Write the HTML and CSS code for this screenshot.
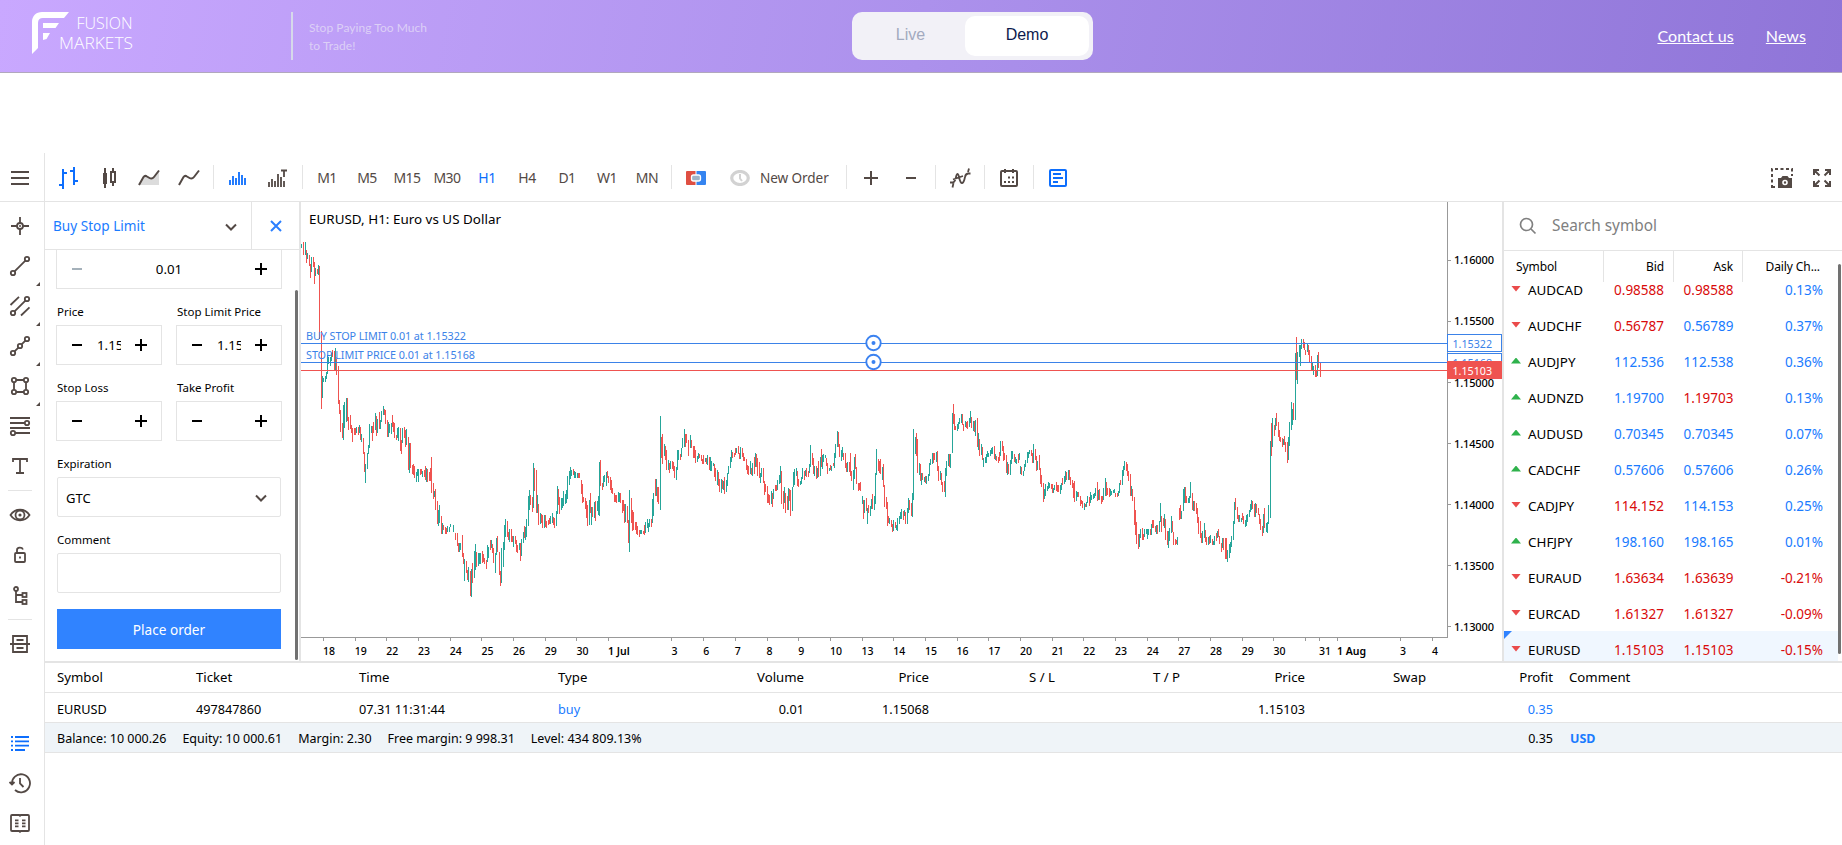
FILE: index.html
```html
<!DOCTYPE html>
<html lang="en">
<head>
    <meta charset="UTF-8">
    <meta name="viewport" content="width=device-width, initial-scale=1.0">
    <title>Fusion Markets - Web Terminal</title>
    <link rel="stylesheet" href="styles.css">
</head>
<body>
    <header class="site-header">
        <svg class="logo" width="102" height="44" viewBox="0 0 102 44">
            <path fill="#fff" d="M0 42V10C0 4 4 0 10 0H37L32 6H11Q6 6 6 11V36Z"/>
            <path fill="#fff" d="M11 11H27L23.500 16H11ZM11 21H18L14.500 27L11 28Z"/>
            <text x="44.500" y="17" textLength="56" lengthAdjust="spacingAndGlyphs">FUSION</text>
            <text x="27" y="37" textLength="74" lengthAdjust="spacingAndGlyphs">MARKETS</text>
        </svg>
        <div class="tagline">Stop Paying Too Much<br>to Trade!</div>
        <div class="account-switch">
            <a class="switch-item">Live</a>
            <a class="switch-item active">Demo</a>
        </div>
        <nav class="header-links">
            <a>Contact us</a>
            <a>News</a>
        </nav>
    </header>

    <div class="terminal">
        <aside class="sidebar">
            <div class="menu-button">
                <svg class="icon" viewBox="0 0 24 24"><path d="M3 6H21M3 12H21M3 18H21"/></svg>
            </div>
            <div class="tools">
                <div class="tool"><svg class="icon" viewBox="0 0 24 24"><circle cx="12" cy="12" r="3"/><circle class="solid" cx="12" cy="12" r="1"/><path d="M12 3V9M12 15V21M3 12H9M15 12H21"/></svg></div>
                <div class="tool more"><svg class="icon" viewBox="0 0 24 24"><circle cx="19" cy="5" r="2.200"/><circle cx="5" cy="19" r="2.200"/><path d="M6.600 17.400L17.400 6.600"/></svg></div>
                <div class="tool more"><svg class="icon" viewBox="0 0 24 24"><circle cx="19" cy="5" r="2.200"/><circle cx="5" cy="19" r="2.200"/><path d="M6.600 17.400L17.400 6.600M2.500 11L11 2.800M13 21.500L21.500 13.300"/></svg></div>
                <div class="tool more"><svg class="icon" viewBox="0 0 24 24"><circle cx="19" cy="5" r="2.200"/><circle cx="12" cy="12" r="2.200"/><circle cx="5" cy="19" r="2.200"/><path d="M6.600 17.400L10.400 13.600M13.600 10.400L17.400 6.600"/></svg></div>
                <div class="tool more"><svg class="icon" viewBox="0 0 24 24"><circle cx="6" cy="6" r="2.200"/><circle cx="18" cy="6" r="2.200"/><circle cx="6" cy="18" r="2.200"/><circle cx="18" cy="18" r="2.200"/><path d="M8.200 6H15.800M8.200 18H15.800M6 8.200V15.800M18 8.200V15.800"/></svg></div>
                <div class="tool"><svg class="icon" viewBox="0 0 24 24"><path d="M2 4H22M2 9H16.800M2 14H22M7.200 19H22"/><circle cx="19" cy="9" r="2.200"/><circle cx="5" cy="19" r="2.200"/></svg></div>
                <div class="tool"><svg class="icon" viewBox="0 0 24 24"><path d="M5 8V5H19V8M12 5V19M8 19H16"/></svg></div>
                <div class="tool-line"></div>
                <div class="tool"><svg class="icon" viewBox="0 0 24 24"><path d="M2.500 12C7 5 17 5 21.500 12C17 19 7 19 2.500 12Z"/><circle cx="12" cy="12" r="4.500"/><circle class="solid" cx="12" cy="12" r="1.600"/></svg></div>
                <div class="tool"><svg class="icon" viewBox="0 0 24 24"><rect x="7" y="10" width="10" height="9" rx="1"/><path d="M9 10V7C9 4 14 4 15 6.500M12 13.500V15.500"/></svg></div>
                <div class="tool"><svg class="icon" viewBox="0 0 24 24"><circle cx="8" cy="6" r="2"/><path d="M8 8V19H14M8 12H14"/><rect x="14.500" y="10" width="4" height="4"/><rect x="14.500" y="17" width="4" height="4"/></svg></div>
                <div class="tool-line"></div>
                <div class="tool"><svg class="icon" viewBox="0 0 24 24"><path d="M5 11V4H19V11M5 13V20H19V13M2 12H22M8.500 8H15.500M8.500 16H15.500"/></svg></div>
            </div>
            <div class="tools tools-bottom">
                <div class="tool"><svg class="icon blue" viewBox="0 0 24 24"><path d="M7 6H21M7 10.300H21M7 14.600H21M7 19H17M3 6H5M3 10.300H5M3 14.600H5M3 19H5"/></svg></div>
                <div class="tool"><svg class="icon" viewBox="0 0 24 24"><path d="M4 13A9 9 0 1 1 7 19M1.500 11L4 13.500L6.500 11M12 7V12.500L15.500 16"/></svg></div>
                <div class="tool"><svg class="icon" viewBox="0 0 24 24"><path d="M11 4H4Q3 4 3 5V19Q3 20 4 20H11L12 20.800L13 20H20Q21 20 21 19V5Q21 4 20 4H13L12 4.800ZM7 9.300H10.500M7 12.300H10.500M7 15.300H10.500M14 9.300H17.500M14 12.300H17.500M14 15.300H17.500" stroke-width="1.800"/></svg></div>
            </div>
        </aside>

        <main class="main">
            <div class="toolbar">
                <div class="tb-item"><svg class="icon blue" viewBox="0 0 24 24"><path d="M6 3V23M2 19H6M6 7H10M17 1V19M13 5H17M17 15H21"/></svg></div>
                <div class="tb-item"><svg class="icon" viewBox="0 0 24 24"><path d="M8 2V22M16 2V6M16 16V20"/><rect class="solid" x="6" y="7" width="4" height="11"/><rect x="14" y="6" width="4" height="10"/></svg></div>
                <div class="tb-item"><svg class="icon" viewBox="0 0 24 24"><path class="shade" d="M2 19L8 10L15 13L22 4V19Z"/><path d="M2 19L6.500 11Q8 9 10 10.500L12.500 12Q15 13.500 17 11L22 4.500"/></svg></div>
                <div class="tb-item"><svg class="icon" viewBox="0 0 24 24"><path d="M2 19L6.500 11Q8 9 10 10.500L12.500 12Q15 13.500 17 11L22 4.500"/></svg></div>
                <div class="tb-sep"></div>
                <div class="tb-item"><svg class="icon blue" viewBox="0 0 24 24"><path d="M4 19V14M7 19V10M10 19V12M13 19V6M16 19V9M19 19V12" stroke-width="1.800"/></svg></div>
                <div class="tb-item"><svg class="icon" viewBox="0 0 24 24"><path d="M3 21V16M6 21V13M9 21V15M12 21V8M15 21V11M18 21V15M15 4.500H21M18 4.500V11" stroke-width="1.800"/></svg></div>
                <div class="tb-sep"></div>
                <div class="tb-item">M1</div>
                <div class="tb-item">M5</div>
                <div class="tb-item">M15</div>
                <div class="tb-item">M30</div>
                <div class="tb-item selected">H1</div>
                <div class="tb-item">H4</div>
                <div class="tb-item">D1</div>
                <div class="tb-item">W1</div>
                <div class="tb-item">MN</div>
                <div class="tb-sep"></div>
                <div class="tb-item"><svg width="20" height="14" viewBox="0 0 20 14"><path fill="#df4f42" d="M1 0H9.500V14H1Q0 14 0 13V1Q0 0 1 0Z"/><path fill="#3584f0" d="M10.500 0H19Q20 0 20 1V13Q20 14 19 14H10.500Z"/><rect x="5.500" y="4" width="9" height="6" rx="2" fill="#9fb4c8" stroke="#fff" stroke-width="1.300"/></svg></div>
                <div class="tb-item new-order">
                    <svg width="20" height="16" viewBox="0 0 20 16"><ellipse cx="10" cy="8" rx="8.300" ry="6.500" fill="none" stroke="#d2d2d2" stroke-width="3.200"/><path d="M10 4V8.500L12 11" fill="none" stroke="#d2d2d2" stroke-width="2"/></svg>
                    New Order
                </div>
                <div class="tb-sep"></div>
                <div class="tb-item"><svg class="icon" viewBox="0 0 24 24"><path d="M12 5V19M5 12H19"/></svg></div>
                <div class="tb-item"><svg class="icon" viewBox="0 0 24 24"><path d="M7 12H17"/></svg></div>
                <div class="tb-sep"></div>
                <div class="tb-item"><svg class="icon" viewBox="0 0 24 24"><path d="M2 16.500H5Q7 16 8 11Q9.500 5 11 11Q12.500 18 14.500 17Q16 16 17 11Q17.500 8 20 7.500H22.500M4.500 21.500L5.500 17M5 13.500L15 10M20 6L21 2.500" stroke-width="1.800"/></svg></div>
                <div class="tb-sep"></div>
                <div class="tb-item"><svg class="icon" viewBox="0 0 24 24"><rect x="4" y="5" width="16" height="15" rx="1"/><path d="M8 3V7M16 3V7"/><path stroke-dasharray="2 2" d="M11 11.500H17M7 16H17"/></svg></div>
                <div class="tb-sep"></div>
                <div class="tb-item"><svg class="icon blue" viewBox="0 0 24 24"><rect x="4" y="4" width="16" height="16" rx="1"/><path d="M7 8H15M7 12H17M7 16H12"/></svg></div>
                <div class="tb-right">
                    <div class="tb-item"><svg class="icon" viewBox="0 0 24 24"><path stroke-dasharray="3 2.500" d="M2 22V3H22V10M2 21H7"/><path class="solid" d="M8 12H11L12.500 10H17.500L19 12H22V22H8Z"/><circle cx="15" cy="16.500" r="2" fill="#534945" stroke="#fff" stroke-width="1.600"/></svg></div>
                    <div class="tb-item"><svg class="icon" viewBox="0 0 24 24"><path d="M4 9V4H9M4 4L9.500 9.500M15 4H20V9M20 4L14.500 9.500M4 15V20H9M4 20L9.500 14.500M20 15V20H15M20 20L14.500 14.500"/></svg></div>
                </div>
            </div>

            <div class="workspace">
                <section class="order-panel">
                    <div class="order-head">
                        <div class="order-type">Buy Stop Limit
                            <svg width="12" height="8" viewBox="0 0 12 8"><path d="M1 1.500L6 6.500L11 1.500"/></svg>
                        </div>
                        <div class="order-close">
                            <svg width="12" height="12" viewBox="0 0 12 12"><path d="M1 1L11 11M11 1L1 11"/></svg>
                        </div>
                    </div>
                    <div class="order-body">
                        <div class="stepper volume"><i class="minus off"></i><span>0.01</span><i class="plus"></i></div>
                        <div class="pair">
                            <div class="field">
                                <label>Price</label>
                                <div class="stepper"><i class="minus"></i><span>1.15322</span><i class="plus"></i></div>
                            </div>
                            <div class="field">
                                <label>Stop Limit Price</label>
                                <div class="stepper"><i class="minus"></i><span>1.15168</span><i class="plus"></i></div>
                            </div>
                        </div>
                        <div class="pair">
                            <div class="field">
                                <label>Stop Loss</label>
                                <div class="stepper"><i class="minus"></i><span></span><i class="plus"></i></div>
                            </div>
                            <div class="field">
                                <label>Take Profit</label>
                                <div class="stepper"><i class="minus"></i><span></span><i class="plus"></i></div>
                            </div>
                        </div>
                        <div class="field single">
                            <label>Expiration</label>
                            <div class="select">GTC
                                <svg width="12" height="8" viewBox="0 0 12 8"><path d="M1 1.500L6 6.500L11 1.500"/></svg>
                            </div>
                        </div>
                        <div class="field single">
                            <label>Comment</label>
                            <div class="select"></div>
                        </div>
                        <button class="place-order">Place order</button>
                        <div class="scrollbar"></div>
                    </div>
                </section>

                <section class="chart">
                    <svg id="chart" width="1201" height="459" viewBox="301 202 1201 459">
                        <text class="chart-title" x="309" y="224" textLength="192">EURUSD, H1: Euro vs US Dollar</text>
                        <g id="bars" shape-rendering="crispEdges"></g>
                        <g id="axis"></g>
                        <g class="order-lines" shape-rendering="crispEdges">
                            <path class="line-blue" d="M301 343.500H1447M301 362.500H1447"/>
                            <path class="line-red" d="M301 370.500H1447"/>
                        </g>
                        <text class="order-label" x="306" y="340" textLength="160">BUY STOP LIMIT 0.01 at 1.15322</text>
                        <text class="order-label" x="306" y="359" textLength="169">STOP LIMIT PRICE 0.01 at 1.15168</text>
                        <g class="handles">
                            <circle cx="873.500" cy="343" r="7.200"/><circle class="dot" cx="873.500" cy="343" r="2"/>
                            <circle cx="873.500" cy="362" r="7.200"/><circle class="dot" cx="873.500" cy="362" r="2"/>
                        </g>
                        <rect class="tag" x="1447.500" y="334.500" width="54" height="17"/>
                        <text class="tag-text" x="1452.500" y="347.500" textLength="39.500">1.15322</text>
                        <rect class="tag" x="1447.500" y="353.500" width="54" height="17"/>
                        <text class="tag-text" x="1452.500" y="366.500" textLength="39.500">1.15168</text>
                        <rect class="tag-red" x="1447" y="361" width="55" height="18"/>
                        <text class="tag-text white" x="1452.500" y="374.500" textLength="39.500">1.15103</text>
                    </svg>
                </section>

                <section class="watch">
                    <div class="search">
                        <svg width="18" height="18" viewBox="0 0 18 18"><circle cx="7.500" cy="7.500" r="6"/><path d="M12 12L16.500 16.500"/></svg>
                        Search symbol
                    </div>
                    <div class="watch-head">
                        <div>Symbol</div><div>Bid</div><div>Ask</div><div>Daily Ch...</div>
                    </div>
                    <div class="watch-list">
                        <div class="quote"><i class="down"></i><b>AUDCAD</b><span class="red">0.98588</span><span class="red">0.98588</span><span>0.13%</span></div>
                        <div class="quote"><i class="down"></i><b>AUDCHF</b><span class="red">0.56787</span><span>0.56789</span><span>0.37%</span></div>
                        <div class="quote"><i class="up"></i><b>AUDJPY</b><span>112.536</span><span>112.538</span><span>0.36%</span></div>
                        <div class="quote"><i class="up"></i><b>AUDNZD</b><span>1.19700</span><span class="red">1.19703</span><span>0.13%</span></div>
                        <div class="quote"><i class="up"></i><b>AUDUSD</b><span>0.70345</span><span>0.70345</span><span>0.07%</span></div>
                        <div class="quote"><i class="up"></i><b>CADCHF</b><span>0.57606</span><span>0.57606</span><span>0.26%</span></div>
                        <div class="quote"><i class="down"></i><b>CADJPY</b><span class="red">114.152</span><span>114.153</span><span>0.25%</span></div>
                        <div class="quote"><i class="up"></i><b>CHFJPY</b><span>198.160</span><span>198.165</span><span>0.01%</span></div>
                        <div class="quote"><i class="down"></i><b>EURAUD</b><span class="red">1.63634</span><span class="red">1.63639</span><span class="red">-0.21%</span></div>
                        <div class="quote"><i class="down"></i><b>EURCAD</b><span class="red">1.61327</span><span class="red">1.61327</span><span class="red">-0.09%</span></div>
                        <div class="quote current"><i class="down"></i><b>EURUSD</b><span class="red">1.15103</span><span class="red">1.15103</span><span class="red">-0.15%</span></div>
                    </div>
                    <div class="scrollbar"></div>
                </section>
            </div>

            <section class="trades">
                <div class="trade-row trade-head">
                    <div>Symbol</div><div>Ticket</div><div>Time</div><div>Type</div>
                    <div class="num">Volume</div><div class="num">Price</div><div class="num">S / L</div><div class="num">T / P</div>
                    <div class="num">Price</div><div class="num">Swap</div><div class="num">Profit</div><div class="last">Comment</div>
                </div>
                <div class="trade-row">
                    <div>EURUSD</div><div>497847860</div><div>07.31 11:31:44</div><div class="blue-text">buy</div>
                    <div class="num">0.01</div><div class="num">1.15068</div><div></div><div></div>
                    <div class="num">1.15103</div><div></div><div class="num blue-text">0.35</div><div class="last"></div>
                </div>
                <div class="trade-row balance">
                    <div class="totals">
                        <span>Balance: 10 000.26</span><span>Equity: 10 000.61</span><span>Margin: 2.30</span><span>Free margin: 9 998.31</span><span>Level: 434 809.13%</span>
                    </div>
                    <div class="num">0.35</div><div class="last currency">USD</div>
                </div>
            </section>
        </main>
    </div>

    <script src="chart.js"></script>
</body>
</html>
```

FILE: styles.css
```css
* {
    box-sizing: border-box;
}
body {
    margin: 0;
    height: 845px;
    overflow: hidden;
    background: #fff;
    color: #000;
    font-family: "Noto Sans", "Open Sans", sans-serif;
    font-size: 13px;
}

/* Header */
.site-header {
    height: 73px;
    border-bottom: 1px solid #b1a8bd;
    background: linear-gradient(100deg, #c9a8ff 0%, #ac91ec 50%, #8f75d8 100%);
    display: grid;
    grid-template-columns: 260px 560px 241px 1fr;
    align-items: start;
    padding: 12px 36px 0 32px;
}
.logo {
    overflow: visible;
}
.logo text {
    font-family: "Open Sans", sans-serif;
    font-weight: 300;
    font-size: 17px;
    fill: #fff;
}
.tagline {
    height: 48px;
    border-left: 2px solid #d6d9ea;
    padding: 7px 0 0 16px;
    margin-left: -1px;
    font-family: Lato, sans-serif;
    font-size: 12px;
    line-height: 18px;
    letter-spacing: 0.05px;
    color: #dccff6;
}
.account-switch {
    display: flex;
    height: 48px;
    padding: 4px;
    border-radius: 10px;
    background: #f2f1f7;
    font-family: "Liberation Sans", Arial, sans-serif;
    font-size: 16px;
}
.switch-item {
    width: 109px;
    line-height: 37px;
    text-align: center;
    color: #a3aabf;
}
.switch-item.active {
    width: 124px;
    border-radius: 10px;
    background: #fff;
    color: #0d1a4d;
}
.header-links {
    display: flex;
    justify-content: flex-end;
    gap: 32px;
    padding-top: 14px;
    font-family: Lato, sans-serif;
    font-size: 16px;
    line-height: 20px;
    letter-spacing: 0.1px;
    color: #fff;
}
.header-links a {
    text-decoration: underline;
}

/* Terminal */
.terminal {
    display: flex;
    height: 692px;
    margin-top: 80px;
}
.sidebar {
    width: 45px;
    border-right: 1px solid #e4e4e4;
    display: flex;
    flex-direction: column;
}
.menu-button {
    height: 49px;
    border-bottom: 1px solid #e4e4e4;
    padding: 13px 0 0 8px;
}
.tools {
    padding: 4px 4px 0 0;
}
.tools-bottom {
    margin-top: auto;
    padding: 0 4px 2px 0;
}
.tool {
    position: relative;
    height: 40px;
    display: flex;
    align-items: center;
    justify-content: center;
}
.tool.more::after {
    content: "";
    position: absolute;
    right: 0;
    bottom: 0;
    border-left: 4px solid transparent;
    border-bottom: 4px solid #534945;
}
.tool-line {
    height: 1px;
    width: 24px;
    margin: 4px 0 4px 8px;
    background: #e4e4e4;
}
.icon {
    width: 24px;
    height: 24px;
    fill: none;
    stroke: #534945;
    stroke-width: 2;
}
.tools .icon {
    stroke-width: 1.8;
}
.icon.blue {
    stroke: #0d6efd;
}
.icon .solid {
    fill: #534945;
    stroke: none;
}
.icon .shade {
    fill: #dcdcdc;
    stroke: none;
}

/* Toolbar */
.main {
    flex: 1;
    min-width: 0;
}
.toolbar {
    display: flex;
    align-items: center;
    height: 49px;
    padding-left: 4px;
    border-bottom: 1px solid #e4e4e4;
    color: #534945;
}
.tb-item {
    width: 40px;
    display: flex;
    align-items: center;
    justify-content: center;
    padding-top: 1px;
    font-size: 14px;
    letter-spacing: -0.5px;
}
.tb-item.selected {
    color: #0d6efd;
}
.tb-item.new-order {
    width: 126px;
    justify-content: flex-start;
    gap: 10px;
    padding-left: 14px;
    font-size: 13.6px;
    letter-spacing: -0.1px;
    white-space: nowrap;
}
.tb-sep {
    width: 1px;
    height: 24px;
    margin: 0 4px;
    background: #e4e4e4;
}
.tb-right {
    display: flex;
    margin-left: auto;
}

/* Order panel */
.workspace {
    display: flex;
    height: 461px;
    border-bottom: 2px solid #e4e4e4;
}
.order-panel {
    width: 256px;
    border-right: 2px solid #e4e4e4;
}
.order-head {
    display: flex;
    height: 48px;
    border-bottom: 1px solid #e4e4e4;
    color: #1a7bff;
}
.order-head svg, .select svg {
    fill: none;
    stroke: #534945;
    stroke-width: 2;
}
.order-type {
    width: 207px;
    display: flex;
    align-items: center;
    justify-content: space-between;
    padding: 0 14px 0 8px;
    border-right: 1px solid #e4e4e4;
    font-size: 13.6px;
}
.order-type svg {
    margin-top: 3px;
}
.order-close {
    flex: 1;
    display: flex;
    align-items: center;
    justify-content: center;
}
.order-close svg {
    stroke: #2b7fff;
}
.order-body {
    position: relative;
    height: 411px;
    overflow: hidden;
    padding: 0 17px 0 11px;
}
.stepper {
    display: flex;
    align-items: center;
    justify-content: space-between;
    height: 40px;
    padding: 0 14px;
    border: 1px solid #e4e4e4;
}
.stepper span {
    width: 24px;
    overflow: hidden;
    font-size: 13.3px;
}
.stepper.volume {
    margin-top: -1px;
}
.stepper.volume span {
    width: auto;
}
.minus, .plus {
    width: 12px;
    height: 12px;
    background: linear-gradient(#000, #000) center / 10px 2px no-repeat;
}
.plus {
    background: linear-gradient(#000, #000) center / 12px 2px no-repeat,
                linear-gradient(#000, #000) center / 2px 12px no-repeat;
}
.minus.off {
    background: linear-gradient(#a5b1ba, #a5b1ba) center / 10px 2px no-repeat;
}
.pair {
    display: grid;
    grid-template-columns: 106px 106px;
    gap: 14px;
}
.field label {
    display: block;
    height: 36px;
    padding: 13px 0 0 1px;
    line-height: 20px;
    font-size: 11.5px;
    white-space: nowrap;
}
.field.single {
    padding: 0 1px;
}
.field.single label {
    padding-left: 0;
}
.select {
    display: flex;
    align-items: center;
    justify-content: space-between;
    height: 40px;
    padding: 2px 13px 0 8px;
    border: 1px solid #e4e4e4;
    border-radius: 2px;
    font-size: 13px;
}
.place-order {
    display: block;
    width: 224px;
    height: 40px;
    margin: 16px 0 0 1px;
    padding-top: 2px;
    border: none;
    background: #3083ff;
    color: #fff;
    font-family: inherit;
    font-size: 13.6px;
}
.scrollbar {
    position: absolute;
    z-index: 2;
    right: 1px;
    width: 3px;
    border-radius: 2px;
    background: #717171;
}
.order-body .scrollbar {
    top: 40px;
    height: 370px;
}

/* Chart */
.chart {
    width: 1201px;
}
.chart svg {
    display: block;
}
.chart-title {
    font-size: 13.4px;
}
.axis-line {
    fill: none;
    stroke: #999;
}
.axis-text {
    font-size: 11px;
    font-weight: 500;
}
.axis-text.time {
    font-size: 10.5px;
}
.axis-text.bold {
    font-weight: 600;
}
.bar-up {
    fill: #26a69a;
}
.bar-down {
    fill: #ef5350;
}
.line-blue {
    stroke: #3b82e8;
}
.line-red {
    stroke: #ef5350;
}
.order-label {
    font-size: 10.8px;
    fill: #3b82e8;
}
.handles circle {
    fill: #fff;
    stroke: #3b82f0;
    stroke-width: 1.9;
}
.handles .dot {
    fill: #3b82f0;
    stroke: none;
}
.tag {
    fill: #fff;
    stroke: #3b82e8;
}
.tag-red {
    fill: #ef5350;
}
.tag-text {
    font-size: 10.7px;
    fill: #3b82e8;
}
.tag-text.white {
    fill: #fff;
}

/* Market watch */
.watch {
    position: relative;
    width: 340px;
    border-left: 2px solid #e4e4e4;
    overflow: hidden;
}
.search {
    display: flex;
    align-items: center;
    gap: 15px;
    height: 49px;
    padding: 0 0 1px 15px;
    border-bottom: 1px solid #e4e4e4;
    font-size: 15.4px;
    color: #808080;
}
.search svg {
    fill: none;
    stroke: #808080;
    stroke-width: 1.7;
}
.watch-head {
    position: relative;
    z-index: 1;
    display: grid;
    grid-template-columns: 100px 70px 69px 1fr;
    height: 30px;
    line-height: 31px;
    background: #fff;
    font-size: 12px;
    letter-spacing: -0.1px;
}
.watch-head div {
    padding-right: 9px;
    border-right: 1px solid #e4e4e4;
    text-align: right;
}
.watch-head div:first-child {
    padding-left: 12px;
    text-align: left;
}
.watch-head div:last-child {
    padding-right: 22px;
    border: none;
}
.watch-list {
    margin-top: -10px;
}
.quote {
    position: relative;
    display: grid;
    grid-template-columns: 17px 59px 77px 69.5px 89.5px;
    align-items: center;
    height: 36px;
    margin-right: 4px;
    padding: 2px 0 0 7px;
    font-size: 13.5px;
    color: #1a7bff;
}
.quote b {
    font-weight: 400;
    font-size: 13.4px;
    color: #000;
}
.quote span {
    text-align: right;
}
.quote .red {
    color: #d90b0b;
}
.up, .down {
    width: 10px;
    height: 6px;
    margin-top: -3px;
    background: #2fb24c;
    clip-path: polygon(50% 0, 100% 100%, 0 100%);
}
.down {
    background: #ea4b4b;
    clip-path: polygon(0 0, 100% 0, 50% 100%);
}
.quote.current {
    background: #f0f7ff;
}
.quote.current::before {
    content: "";
    position: absolute;
    left: 0;
    top: 0;
    border-top: 8px solid #3083ff;
    border-right: 8px solid transparent;
}
.watch .scrollbar {
    top: 62px;
    height: 390px;
}

/* Trades */
.trade-row {
    display: grid;
    grid-template-columns: 139px 163px 199px 121px 125px 125px 126px 125px 125px 121px 127px 1fr;
    align-items: center;
    height: 30px;
    padding: 2px 0 0 12px;
    border-bottom: 1px solid #e4e4e4;
    font-size: 12.7px;
}
.trade-row.trade-head {
    padding-top: 0;
    padding-bottom: 1px;
    font-size: 13.2px;
}
.num {
    text-align: right;
}
.last {
    padding-left: 17px;
}
.trade-head .last {
    padding-left: 16px;
}
.blue-text {
    color: #1a7bff;
}
.balance {
    background: #eff4f8;
    font-size: 12.5px;
}
.totals {
    grid-column: 1 / 11;
    display: flex;
    gap: 16px;
}
.currency {
    font-weight: 700;
    color: #1a7bff;
}
```

FILE: chart.js
```js
// Each bar is colour + x,high,low in thirds of a pixel (g = up, r = down)
var weeks = [
    { left: 300, bars: "g5,72,84 r9,66,105 g16,66,104 r19,90,129 g22,98,117 r28,105,137 r31,132,174 g34,111,156 r40,111,140 r43,126,192 g46,145,168 r52,148,162 g55,135,165 r58,138,357 r64,333,567 g67,468,533 g70,473,486 g76,468,486 g79,455,475 g82,405,462 g85,410,432 g91,412,440 g94,399,424 r97,390,412 r103,393,450 g106,384,450 r109,412,465 r115,438,553 r118,540,581 r121,570,636 r127,609,654 g130,555,660 g133,546,624 g139,534,606 r142,534,602 r145,591,630 r151,585,627 r154,615,640 r157,624,666 r163,624,646 r166,624,644 g169,621,640 r175,621,645 g178,615,640 r181,621,660 g184,642,666 r190,654,702 r193,696,755 g196,732,789 g202,699,747 g205,675,702 g208,612,684 g214,618,640 r217,618,663 r220,606,640 g226,579,630 r229,588,648 g232,597,640 r238,576,628 g241,600,628 g244,573,606 g250,558,585 r253,567,584 r256,570,612 r262,600,651 g265,606,651 g268,612,640 g274,609,642 r277,585,620 r280,606,636 r283,609,654 r289,645,660 g292,624,655 g295,621,663 r301,624,693 r304,660,702 g307,624,669 r313,621,654 r316,630,681 g319,627,675 r325,651,750 g328,668,759 r331,669,745 r337,735,762 r340,732,764 r343,738,774 g349,756,786 g352,748,768 g355,747,786 r361,747,765 r364,747,762 g367,752,770 r373,750,770 r376,738,780 g379,744,786 r382,746,784 r388,756,783 r391,744,783 r394,711,819 r400,789,837 g403,813,830 r406,807,870 r412,843,912 g415,870,918 g418,855,909 r424,888,942 g427,908,942 r430,915,930 r436,921,942 r439,924,942 g442,918,936 g448,921,936 g451,912,920 g460,915,937 r466,939,960 r472,939,978 r475,968,996 g478,970,996 g481,970,990 r487,945,1011 r490,999,1032 g493,1018,1083 r499,1023,1060 r502,1050,1080 g505,1041,1085 r511,1053,1128 g514,1047,1131 r517,1029,1089 g523,993,1074 g526,972,1050 r529,996,1041 g535,999,1038 g538,1000,1034 g541,999,1032 r547,993,1030 r550,1002,1026 r553,1014,1032 r559,1020,1047 g562,975,1025 g565,981,1014 r571,960,990 g574,960,985 r577,972,1000 r580,984,1029 g586,999,1059 g589,954,1005 r592,948,996 r598,996,1065 r601,1053,1098 g604,984,1089 g610,966,1041 g613,915,990 g616,897,951 r622,903,951 r625,936,960 g628,927,966 r634,927,966 r637,948,966 g640,948,980 r646,948,972 r649,960,996 r652,975,999 g658,968,990 r661,969,1023 g664,957,1008 g670,936,970 r673,918,955 g676,921,960 g679,897,950 g685,828,918 g688,810,870 r691,825,855 r697,831,876 g700,729,864 r703,744,813 r709,750,879 g712,825,879 r715,852,915 g721,879,912 r724,882,908 r727,885,924 g733,885,924 r736,885,922 r739,902,922 r745,900,915 r748,894,912 g751,887,912 g757,879,910 r760,890,914 r763,894,924 g769,873,918 g772,798,882 r775,807,855 r778,831,882 g784,834,870 g787,834,865 g790,813,858 g796,822,852 g799,810,850 g802,768,837 g808,753,795 g811,741,777 g814,750,768 r820,747,765 g823,753,774 g826,756,774 g832,759,774 r835,758,772 r838,759,775 r844,780,822 r847,792,849 r850,832,848 r856,834,867 r859,843,894 r862,855,918 g868,840,915 r871,819,880 g874,861,915 r877,861,892 g883,846,894 r886,843,903 g892,843,873 g895,828,885 g898,726,888 r901,720,798 r907,789,810 g910,768,800 g913,765,786 g919,756,798 r922,753,774 r925,768,790 r931,771,810 r934,780,820 r937,804,822 r943,819,846 r946,826,848 r949,825,849 g955,816,845 g958,818,846 r961,819,850 r967,840,879 r970,840,874 r973,852,909 g976,852,906 r982,858,909 r985,900,969 g988,810,996 r994,834,909 r997,870,933 r1000,876,930 r1006,906,930 r1009,906,942 r1012,918,944 r1018,930,951 g1021,930,943 g1024,930,942 r1030,932,942 r1033,915,945 g1036,906,940 g1042,897,924 g1045,910,936 g1048,897,920 r1054,897,921 g1057,837,910 g1060,819,888 r1066,777,828 g1069,777,827 r1072,801,846 r1075,801,852 g1081,588,870 r1084,651,714 r1087,642,732 g1093,672,708 r1096,678,720 r1099,690,750 g1105,720,750 r1108,729,759 g1111,723,747 r1117,723,747 r1120,726,752 r1123,738,774 g1129,741,780 g1132,690,750 g1135,690,720 r1141,702,720 g1144,684,711 g1147,654,684 g1153,627,680 r1156,642,681 r1159,642,668 r1165,660,708 g1171,645,684" },
    { left: 690, bars: "g1,645,684 r4,660,684 r10,678,714 r13,678,714 r16,690,729 g22,708,726 g25,699,716 r28,702,714 r34,705,724 r37,716,732 r40,705,732 g46,714,726 r49,714,732 g52,705,735 r58,711,750 g61,712,753 g64,722,753 g70,729,738 r73,732,770 r76,744,783 g82,750,795 r85,756,798 r88,777,816 g94,777,819 r97,780,806 g100,782,810 r103,771,822 g109,780,816 g112,759,798 g115,738,762 g121,711,744 g124,690,726 r127,697,714 r133,699,711 r136,684,705 g139,684,700 r145,678,702 r148,700,717 g151,681,717 r157,684,711 r160,699,723 r163,711,723 r169,717,750 r172,735,762 r175,738,765 g181,723,762 r184,744,765 g187,729,768 r193,711,762 g196,699,741 r199,702,741 r202,714,768 r208,726,774 g211,759,789 g214,744,772 r220,744,789 r223,783,825 r226,792,816 r232,798,849 r235,822,849 r238,825,855 g244,813,852 r247,819,861 g250,807,837 r256,795,813 r259,796,813 g262,780,810 g268,765,792 g271,738,790 r274,753,852 r280,813,867 g283,801,849 r286,819,879 r292,828,870 g295,804,870 r298,807,842 r301,810,888 g307,801,873 g310,756,801 g313,747,795 g319,744,768 r322,753,798 r325,777,800 g331,783,795 g334,771,792 g337,744,777 r343,753,780 g346,750,768 r349,744,770 r355,753,771 g358,732,760 g361,675,741 r367,699,735 r370,714,762 g373,738,768 r379,738,777 g382,744,774 r385,723,771 g391,711,768 r394,687,741 g397,705,747 g400,702,726 g406,705,714 r409,714,738 r412,729,762 g418,744,753 r421,735,750 g424,738,753 r430,729,738 g433,699,744 g436,672,714 g442,633,681 r445,636,681 r448,672,711 g454,690,723 g457,681,711 r460,699,720 r466,699,744 r469,729,756 g472,726,756 r478,726,756 r481,699,768 r484,753,783 g490,750,810 g493,711,777 r496,702,747 r499,741,792 r505,789,813 r508,790,812 r511,786,813 g517,828,852 r520,840,897 g523,840,879 r529,834,873 g532,864,912 r535,855,879 g541,858,888 g544,837,867 r547,822,867 g553,828,870 g556,759,852 g559,687,765 r565,717,753 r568,723,759 r571,717,762 g577,741,780 r580,732,801 r583,795,861 r589,831,867 r592,846,918 r595,888,909 g598,894,912 r604,900,921 r607,912,936 g610,900,933 r616,906,924 g619,914,928 g622,894,933 g628,888,912 g631,876,897 g634,867,897 r640,873,900 g643,870,888 r646,876,912 g652,864,912 g655,834,879 r658,840,870 r664,849,888 g667,819,891 g670,627,840 g676,651,702 r679,639,708 r682,657,759 g688,729,765 r691,732,783 g694,759,795 r697,759,780 g703,771,786 r706,768,788 g709,768,792 g715,762,783 g718,729,768 g721,717,735 g727,699,732 r730,699,730 r733,699,720 g739,696,726 r742,693,753 r745,738,783 g751,753,780 r754,759,796 r757,786,816 r763,783,816 g766,744,831 g769,723,768 g775,702,738 r778,702,742 g781,702,744 g787,579,699 r790,552,612 r793,582,630 r796,618,630 g802,612,633 g805,606,627 g808,594,612 g814,582,609 r817,582,615 r820,612,633 g826,603,620 r829,606,624 r832,603,627 g838,594,620 g841,573,609 r844,591,624 g850,603,633 r853,603,636 g856,600,648 r862,594,681 g865,639,690 r868,657,708 g874,672,705 r877,681,720 g880,714,741 g886,711,729 g889,702,728 g892,693,711 g895,699,711 g901,690,708 g904,684,702 g907,681,702 r913,678,717 g916,702,720 r919,708,723 r925,711,729 r928,696,722 g931,663,708 r937,663,693 r940,678,723 r943,699,720 r949,705,759 g952,726,765 r955,732,762 g961,720,765 g964,693,732 g967,693,718 r973,702,726 g976,712,730 g979,717,732 r985,702,728 g988,699,720 g991,738,762 r994,741,765 g1000,753,768 g1003,732,754 g1006,720,741 g1012,696,729 g1015,696,714 g1018,690,702 r1024,690,708 r1027,699,729 g1030,672,729 r1036,687,720 r1039,708,753 g1042,723,750 r1048,705,750 r1051,744,792 r1054,765,801 r1060,789,846 g1063,807,837 g1066,792,828 g1072,798,813 g1075,786,806 g1078,789,804 r1084,792,808 r1087,792,819 g1090,804,818 g1093,795,810 r1099,786,813 r1102,795,815 r1105,795,815 g1111,795,822 g1114,789,810 r1117,774,795 g1123,768,792 g1126,753,786 r1129,756,780 g1135,750,780 r1138,750,780" },
    { left: 1070, bars: "r1,771,795 r7,780,804 r10,789,834 r13,783,846 g19,813,843 g22,816,830 r25,816,831 r31,828,858 r34,840,852 r37,843,864 g43,849,870 r46,851,860 g49,846,860 g52,828,849 r58,831,858 g61,816,849 g64,824,840 g70,822,837 g73,818,834 g76,804,828 r82,786,843 g85,810,840 r88,807,840 r94,828,852 r97,828,846 g100,804,840 g106,774,828 r109,786,829 r112,804,826 r118,804,831 g121,807,828 g124,812,824 g130,810,819 g133,807,818 r136,819,831 r142,819,831 g145,813,828 g148,789,818 r151,780,795 g157,750,795 g160,738,768 g163,723,750 r169,726,753 r172,732,768 r175,753,783 r181,762,828 g184,798,828 r187,807,843 r193,831,915 r196,870,945 r199,906,972 r205,942,987 g208,942,981 g211,927,954 r217,924,960 r220,942,960 g223,927,951 g229,927,942 g232,927,957 g235,927,946 r241,927,945 g244,912,945 r247,900,924 r250,900,924 r256,918,936 g259,915,941 r262,915,942 g268,903,936 g271,849,906 r274,888,936 r280,894,918 g283,882,924 r286,897,960 r292,933,975 g295,933,984 g298,924,963 g304,888,939 r307,903,936 r310,936,975 r316,957,975 r319,960,972 g322,951,975 r328,864,900 r331,855,897 g334,873,896 g340,807,873 g343,801,849 r346,801,849 r349,828,850 g355,834,849 g358,828,849 g361,786,834 r367,819,870 g370,843,873 r373,843,873 r379,849,882 r382,864,909 r385,891,942 r391,903,954 r394,939,969 g397,933,969 g403,909,954 r406,930,966 r409,951,975 g415,951,975 r418,948,972 g421,945,970 r427,957,975 g430,962,975 g433,948,975 r439,939,963 g442,933,955 r445,927,951 r448,948,972 r454,969,996 g457,954,985 r460,954,990 r466,954,1017 r469,954,1017 g472,990,1026 g478,972,1014 g481,966,999 g484,948,981 g490,903,960 g493,846,912 r496,834,870 r502,861,897 r505,884,906 g508,885,906 g514,894,906 r517,879,900 r520,888,912 g526,900,921 g529,885,918 g532,882,906 g538,870,891 g541,852,876 g544,840,870 r547,843,867 r553,852,891 g556,849,891 r559,852,879 r565,864,885 r568,882,912 r571,897,930 r577,918,948 g580,882,939 r583,864,924 g589,909,936 g592,906,939 g595,855,912 g601,663,894 r604,609,708 g607,594,681 r613,615,648 g616,594,630 r619,579,618 r625,606,651 r628,630,663 r631,651,666 r637,654,681 g640,657,675 r643,648,675 r646,666,696 r652,666,729 g655,651,720 g658,606,678 g664,546,630 g667,567,615 r670,549,600 g676,399,600 r679,351,480 g682,396,492 g688,375,411 g691,375,438 g694,357,387 r700,357,384 r703,366,390 r706,390,405 g712,372,396 r715,375,405 r718,390,430 r724,408,450 g727,429,450 g730,438,465 r736,435,471 r739,450,471 g742,405,468 r745,396,444 r751,429,471" }
];

var rects = '';
weeks.forEach(function (week) {
    week.bars.split(' ').forEach(function (bar) {
        var v = bar.slice(1).split(',').map(Number);
        var cls = bar[0] === 'g' ? 'bar-up' : 'bar-down';
        var x = week.left + Math.floor(v[0] / 3);
        var y = 220 + Math.round(v[1] / 3);
        rects += '<rect class="' + cls + '" x="' + x + '" y="' + y + '" width="1" height="' + Math.max(1, Math.round((v[2] - v[1]) / 3)) + '"/>';
    });
});
document.getElementById('bars').innerHTML = rects;

// Price and time axes
var prices = ['1.16000', '1.15500', '1.15000', '1.14500', '1.14000', '1.13500', '1.13000'];
var days = [18, 19, 22, 23, 24, 25, 26, 29, 30, '1 Jul', '', 3, 6, 7, 8, 9, 10, 13, 14, 15, 16, 17, 20, 21, 22, 23, 24, 27, 28, 29, 30];
var ticks = days.map(function (day, i) {
    return [323.5 + i * 31.68, day];
});
ticks.push([1305.5, ' '], [1319.5, 31], [1337.5, '1 Aug'], [1400.5, 3], [1432.5, 4]);

var axis = '<path class="axis-line" shape-rendering="crispEdges" d="M1447.5 202V637.5H301';
prices.forEach(function (p, i) {
    axis += 'M1448 ' + (Math.floor(260.3 + i * 61.1) + 0.5) + 'h3';
});
ticks.forEach(function (t) {
    if (t[1] !== '') axis += 'M' + (Math.floor(t[0]) + 0.5) + ' 638v3';
});
axis += '"/>';
prices.forEach(function (p, i) {
    axis += '<text class="axis-text" x="1454" y="' + (264.3 + i * 61.1) + '" textLength="40">' + p + '</text>';
});
ticks.forEach(function (t) {
    var bold = /[A-Z]/.test(t[1]) ? ' bold' : '';
    axis += '<text class="axis-text time' + bold + '" x="' + (t[0] - 0.5) + '" y="655">' + t[1] + '</text>';
});
document.getElementById('axis').innerHTML = axis;
```
